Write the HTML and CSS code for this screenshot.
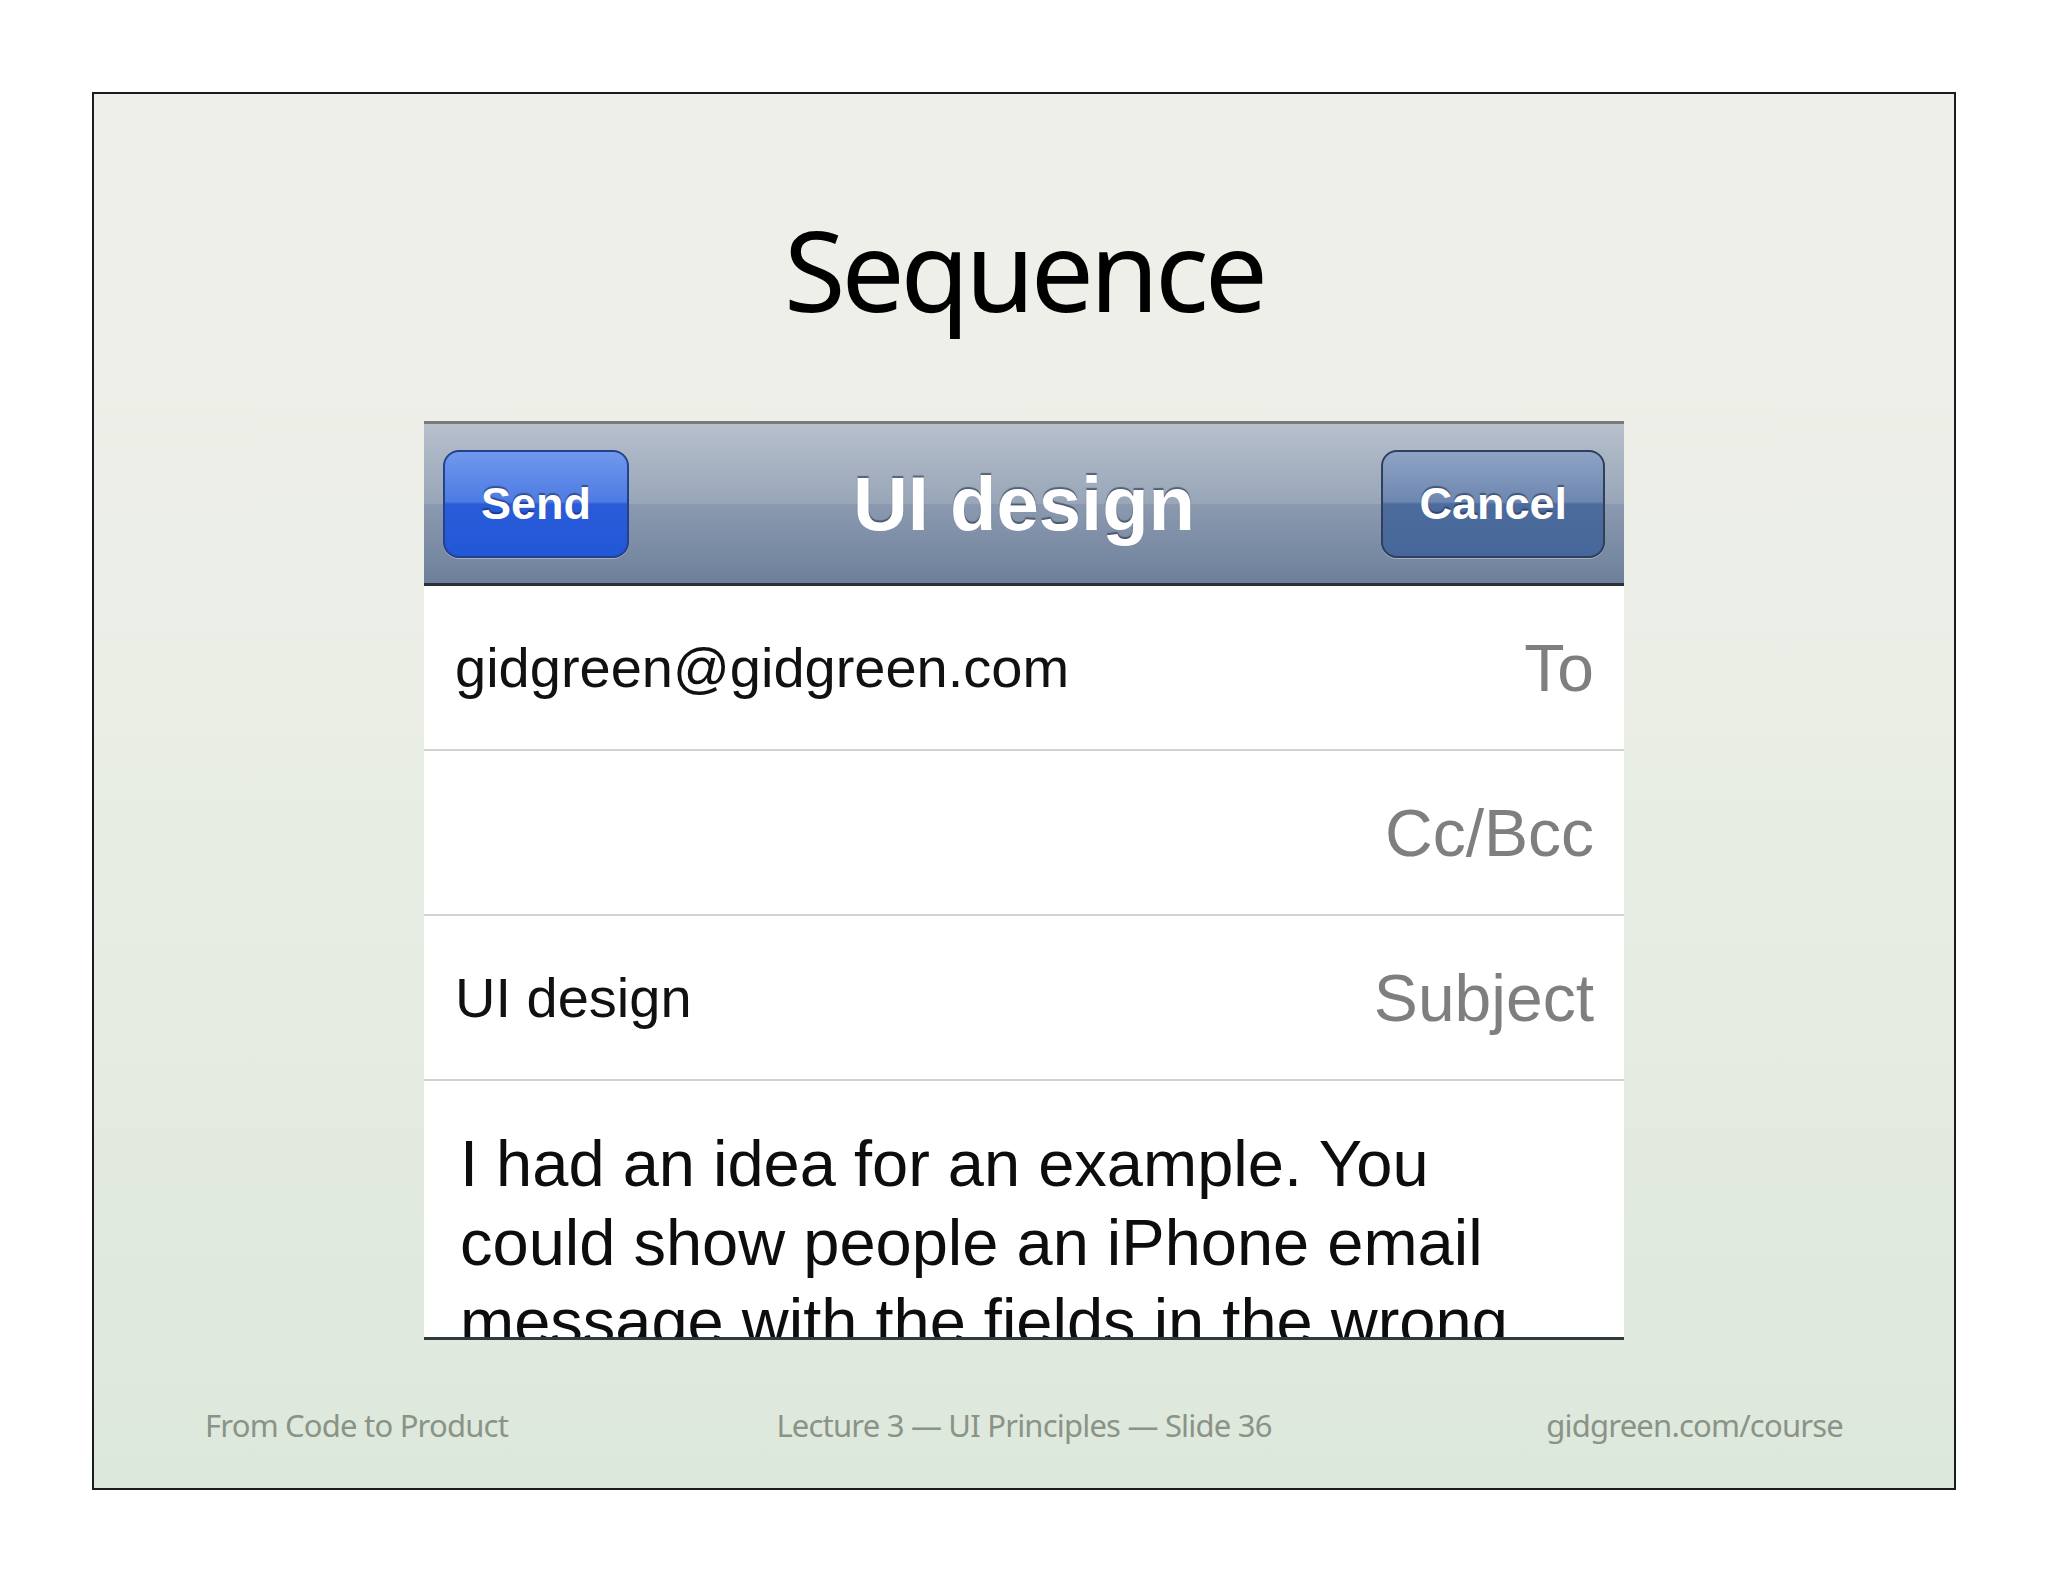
FILE: index.html
```html
<!DOCTYPE html>
<html lang="en">
<head>
    <meta charset="UTF-8">
    <meta name="viewport" content="width=device-width, initial-scale=1.0">
    <title>Sequence</title>
    <link rel="stylesheet" href="styles.css">
</head>
<body>
    <div class="slide">
        <h1 class="slide-title">Sequence</h1>

        <div class="phone">
            <div class="nav">
                <button class="nav-btn send">Send</button>
                <div class="nav-title">UI design</div>
                <button class="nav-btn cancel">Cancel</button>
            </div>
            <div class="row">
                <span class="value">gidgreen@gidgreen.com</span>
                <span class="label">To</span>
            </div>
            <div class="row">
                <span class="value"></span>
                <span class="label">Cc/Bcc</span>
            </div>
            <div class="row">
                <span class="value">UI design</span>
                <span class="label">Subject</span>
            </div>
            <div class="message">
                I had an idea for an example. You<br>
                could show people an iPhone email<br>
                message with the fields in the wrong
            </div>
        </div>

        <div class="footer">
            <span class="foot-left">From Code to Product</span>
            <span class="foot-mid">Lecture 3 — UI Principles — Slide 36</span>
            <span class="foot-right">gidgreen.com/course</span>
        </div>
    </div>
</body>
</html>
```

FILE: styles.css
```css
body {
    margin: 0;
    background: #ffffff;
    font-family: "Noto Sans", "Open Sans", sans-serif;
}
.slide {
    box-sizing: border-box;
    width: 1864px;
    height: 1398px;
    margin: 92px;
    border: 2px solid #1c1c1c;
    background: linear-gradient(to bottom, #efefe9 0%, #ecefe7 35%, #dde8dc 100%);
    display: flex;
    flex-direction: column;
    align-items: center;
}
.slide-title {
    margin: 119px 0 0;
    font-size: 112px;
    font-weight: 400;
    letter-spacing: -4px;
    line-height: 1;
    color: #000;
}
.phone {
    margin-top: 96px;
    width: 1200px;
    font-family: "Liberation Sans", Arial, sans-serif;
    background: #fff;
}
.nav {
    box-sizing: border-box;
    height: 165px;
    border-top: 3px solid #7a7a7a;
    border-bottom: 3px solid #2a3238;
    background: linear-gradient(to bottom, #b7c0cc 0%, #98a6b8 50%, #8b9ab0 50%, #6e809b 100%);
    padding: 0 19px;
    display: grid;
    grid-template-columns: 1fr auto 1fr;
    align-items: center;
}
.nav-title {
    font-size: 76px;
    font-weight: bold;
    color: #fff;
    text-shadow: 0 -2px 1px rgba(35, 45, 65, 0.6);
}
.nav-btn {
    height: 108px;
    padding: 0 36px;
    border-radius: 16px;
    font-family: "Liberation Sans", Arial, sans-serif;
    font-size: 45px;
    font-weight: bold;
    color: #fff;
    text-shadow: 0 -2px 1px rgba(20, 30, 60, 0.5);
    box-shadow: 0 1px 0 rgba(255, 255, 255, 0.35);
}
.send {
    justify-self: start;
    border: 2px solid #23428a;
    background: linear-gradient(to bottom, #7198ee 0%, #4d7be3 48%, #2a5cd8 50%, #2157d8 100%);
}
.cancel {
    justify-self: end;
    border: 2px solid #2f3f5c;
    background: linear-gradient(to bottom, #8ea4c6 0%, #6e87b0 48%, #4d6c9e 50%, #466799 100%);
}
.row {
    box-sizing: border-box;
    height: 165px;
    border-bottom: 2px solid #d2d2d2;
    padding: 0 30px 0 31px;
    display: flex;
    align-items: center;
    justify-content: space-between;
}
.value {
    font-size: 56px;
    color: #111;
}
.label {
    font-size: 66px;
    color: #7f7f7f;
}
.message {
    box-sizing: border-box;
    height: 259px;
    overflow: hidden;
    border-bottom: 3px solid #30393d;
    padding: 43px 30px 0 36px;
    font-size: 65px;
    line-height: 79px;
    color: #0d0d0d;
}
.footer {
    box-sizing: border-box;
    width: 100%;
    margin-top: 70px;
    padding: 0 111px;
    display: grid;
    grid-template-columns: 1fr auto 1fr;
    font-size: 31px;
    letter-spacing: -0.8px;
    line-height: 1;
    color: #8b9387;
}
.foot-mid {
    text-align: center;
}
.foot-right {
    text-align: right;
}
```
